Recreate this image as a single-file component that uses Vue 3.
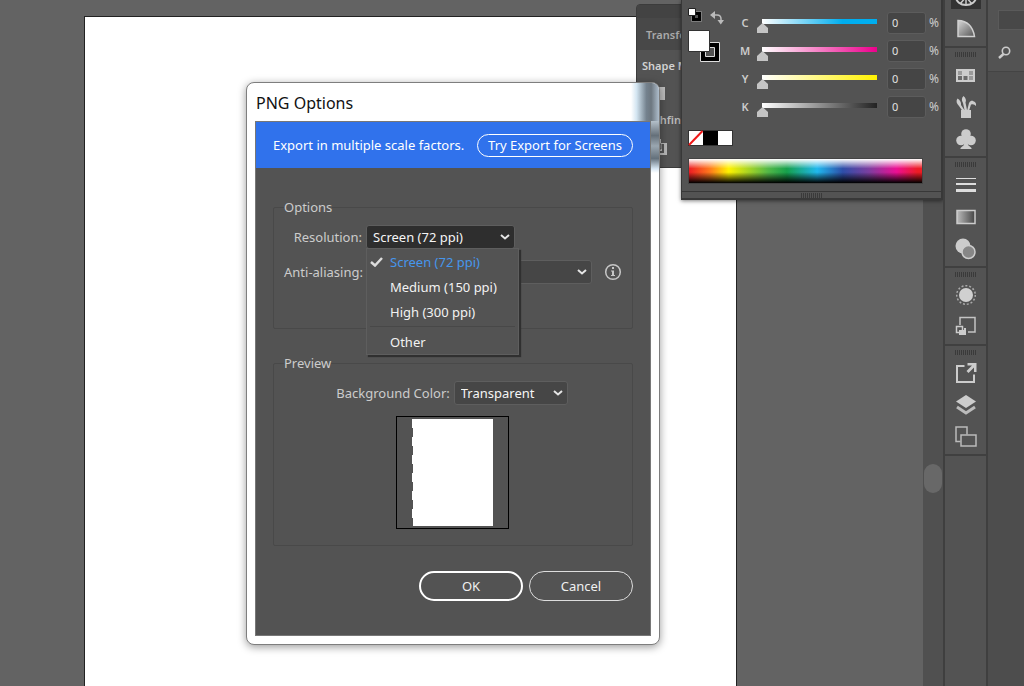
<script setup>
import { ref } from 'vue'

const channels = ref([
  { name: 'C', value: 0, tone: 'cyan' },
  { name: 'M', value: 0, tone: 'magenta' },
  { name: 'Y', value: 0, tone: 'yellow' },
  { name: 'K', value: 0, tone: 'black' },
])

const resolution = ref('Screen (72 ppi)')
const antialias = ref('Art Optimized')
const background = ref('Transparent')
const resolutions = ['Screen (72 ppi)', 'Medium (150 ppi)', 'High (300 ppi)']

const dock = [
  ['Color', 'Color Guide'],
  ['Swatches', 'Brushes', 'Symbols'],
  ['Stroke', 'Gradient', 'Transparency'],
  ['Appearance', 'Graphic Styles'],
  ['Asset Export', 'Layers', 'Artboards'],
]
</script>

<template>
  <div class="app">
    <main class="canvas">
      <div class="artboard"></div>
      <div class="scrollbar"><span class="scroll-thumb"></span></div>

      <section class="pathfinder" aria-label="Pathfinder">
        <div class="panel-bar"></div>
        <div class="panel-tab">Transform</div>
        <div class="panel-body">
          <div class="modes-label">Shape Modes:</div>
          <div class="mode-row">
            <svg width="16" height="16" viewBox="0 0 16 16"><path d="M2 2h13v13H6v-4H2z" fill="#bdbdbd" /></svg>
          </div>
          <div class="finders-label">Pathfinders:</div>
          <div class="mode-row">
            <svg width="18" height="18" viewBox="0 0 18 18"><path d="M1 1h10v4h6v12H6v-6H1z" fill="#b5b5b5" /><path d="M13 6v8H7" fill="none" stroke="#535353" stroke-width="2" /><path d="M6 6h5v5H6z" fill="#8c8c8c" stroke="#535353" /></svg>
          </div>
        </div>
      </section>

      <section class="color-panel" aria-label="Color">
        <div class="color-main">
          <div class="fill-column">
            <div class="fill-tools">
              <svg width="14" height="14" viewBox="0 0 14 14"><path d="M5.500 5.500h6v6h-6z" fill="#535353" stroke="#000" stroke-width="3" /><path d="M3.500 3.500h10v10h-10z" fill="none" stroke="#999" stroke-width=".6" /><path d="M.5.5h7v7h-7z" fill="#fff" stroke="#222" /></svg>
              <svg width="14" height="14" viewBox="0 0 14 14"><path d="M4 4h3q4 0 4 4v2" fill="none" stroke="#bbb" stroke-width="1.500" /><path d="M0 4l5-4v8zM7.500 9H14l-3.200 4.500z" fill="#bbb" /></svg>
            </div>
            <svg class="fill-stroke" width="34" height="34" viewBox="0 0 34 34"><path d="M12.500 12.500h19v19h-19z" fill="#000" stroke="#ddd" /><path d="M17.500 17.500h9v9h-9z" fill="#535353" stroke="#ddd" /><path d="M.5.5h21v21H.5z" fill="#fff" stroke="#333" /></svg>
          </div>
          <div class="channels">
            <div v-for="c in channels" :key="c.name" class="channel">
              <label :for="'range-' + c.name">{{ c.name }}</label>
              <input :id="'range-' + c.name" v-model.number="c.value" type="range" min="0" max="100" :class="['slider', c.tone]" />
              <input v-model.number="c.value" type="text" class="amount" :aria-label="c.name + ' percent'" />
              <span class="unit">%</span>
            </div>
          </div>
        </div>
        <svg class="quick" width="45" height="16" viewBox="0 0 45 16"><path d="M0 0h45v16H0z" fill="#333" /><path d="M1 1h14v14H1zM30 1h14v14H30z" fill="#fff" /><path d="M15 1h15v14H15z" fill="#000" /><path d="M1 15L14.500 1" stroke="#f01818" stroke-width="2" /></svg>
        <div class="spectrum"></div>
        <div class="panel-foot"><span class="grip"></span></div>
      </section>

      <section class="dialog" role="dialog" aria-label="PNG Options">
        <h1>PNG Options</h1>
        <div class="glass-top"></div>
        <div class="glass-side"></div>
        <div class="dialog-body">
          <div class="banner">
            <span>Export in multiple scale factors.</span>
            <button type="button">Try Export for Screens</button>
          </div>
          <form class="settings" @submit.prevent>
            <fieldset class="options">
              <legend>Options</legend>
              <div class="field">
                <label for="resolution">Resolution:</label>
                <div class="combo">
                  <select id="resolution" v-model="resolution" class="open">
                    <option v-for="r in resolutions" :key="r">{{ r }}</option>
                    <option>Other</option>
                  </select>
                  <svg class="chevron" width="10" height="6" viewBox="0 0 10 6"><path d="M1 1l4 3.500L9 1" /></svg>
                  <div class="menu">
                    <button v-for="r in resolutions" :key="r" type="button" :class="{ chosen: r === resolution }" @click="resolution = r">
                      <svg width="13" height="10" viewBox="0 0 13 10"><path v-if="r === resolution" d="M1 5l4 3.500L12 1" fill="none" stroke="#ddd" stroke-width="2.500" /></svg>
                      {{ r }}
                    </button>
                    <hr />
                    <button type="button" @click="resolution = 'Other'"><svg width="13" height="10"></svg>Other</button>
                  </div>
                </div>
              </div>
              <div class="field">
                <label for="antialias">Anti-aliasing:</label>
                <div class="combo wide">
                  <select id="antialias" v-model="antialias">
                    <option>Art Optimized</option>
                  </select>
                  <svg class="chevron" width="10" height="6" viewBox="0 0 10 6"><path d="M1 1l4 3.500L9 1" /></svg>
                </div>
                <svg class="info" width="18" height="18" viewBox="0 0 18 18"><circle cx="9" cy="9" r="7.300" fill="none" stroke="#c6c6c6" stroke-width="1.500" /><path d="M8 4h2v2H8zM7 7.500h3V12h1v1H7v-1h1V8.500H7z" fill="#c6c6c6" /></svg>
              </div>
            </fieldset>
            <fieldset class="preview">
              <legend>Preview</legend>
              <div class="field">
                <label for="background">Background Color:</label>
                <div class="combo small">
                  <select id="background" v-model="background">
                    <option>Transparent</option>
                    <option>White</option>
                    <option>Black</option>
                  </select>
                  <svg class="chevron" width="10" height="6" viewBox="0 0 10 6"><path d="M1 1l4 3.500L9 1" /></svg>
                </div>
              </div>
              <div class="thumb"><div class="page"></div></div>
            </fieldset>
            <div class="actions">
              <button type="submit" class="primary">OK</button>
              <button type="button">Cancel</button>
            </div>
          </form>
        </div>
      </section>
    </main>

    <nav class="dock" aria-label="Panels">
      <div v-for="(group, i) in dock" :key="i" class="dock-group">
        <span class="grip"></span>
        <button v-for="name in group" :key="name" type="button" :aria-label="name" :class="{ active: name === 'Color' }">
          <svg width="22" height="22" viewBox="0 0 22 22">
            <template v-if="name === 'Color'"><ellipse cx="11" cy="11" rx="10" ry="8" fill="none" stroke="#ccc" stroke-width="2" /><path d="M11 2v17M5 4l12 14M17 4L5 18" stroke="#ccc" stroke-width="1.500" /></template>
            <template v-else-if="name === 'Color Guide'">
              <defs><linearGradient id="guide" x1="0" y1="0" x2="1" y2="1"><stop offset=".15" stop-color="#c4c4c4" /><stop offset="1" stop-color="#555" /></linearGradient></defs>
              <path d="M3 2.500Q17 3 19.500 18.500H3z" fill="url(#guide)" stroke="#d0d0d0" stroke-width="1.500" />
            </template>
            <template v-else-if="name === 'Swatches'"><path d="M1 5h19v13H1z" fill="#ccc" /><path d="M3 7h4v4H3zM14 7h4v4h-4z" fill="#9a9a9a" /><path d="M3 12h4v4H3zM8.500 12h4v4h-4z" fill="#6a6a6a" /><path d="M14 12h4v4h-4z" fill="#999" /></template>
            <template v-else-if="name === 'Brushes'"><path d="M6 14h10v8H6zM9.500 14L8 7Q5.500 3 8.500 0q3.500 3 2 6.500l1.500 7.500zM7.500 15L4 10Q0 6 2.500 2.500 6.500 5 6 9l4 6zM12 15l2-8q.5-2 3-2.500l3 1.500q1.500 1.500 1 4-2-2.500-5-1.500l-2 6.500z" fill="#ccc" /></template>
            <template v-else-if="name === 'Symbols'"><circle cx="11" cy="6" r="4.800" fill="#ccc" /><circle cx="6" cy="12.500" r="4.800" fill="#ccc" /><circle cx="16" cy="12.500" r="4.800" fill="#ccc" /><path d="M9.500 8h3l.5 9 3.500 3v1h-11v-1L9 17z" fill="#ccc" /></template>
            <template v-else-if="name === 'Stroke'"><path d="M1 4h20v1H1zM1 9h20v2H1zM1 15h20v3H1z" fill="#ddd" /></template>
            <template v-else-if="name === 'Gradient'">
              <defs><linearGradient id="ramp"><stop offset="0" stop-color="#bbb" /><stop offset="1" stop-color="#444" /></linearGradient></defs>
              <path d="M2 4.500h18v13H2z" fill="url(#ramp)" stroke="#ccc" stroke-width="1.500" />
            </template>
            <template v-else-if="name === 'Transparency'"><circle cx="8" cy="8" r="7.500" fill="#ccc" /><circle cx="13.500" cy="14" r="6.500" fill="#878787" stroke="#ccc" stroke-width="1.500" /></template>
            <template v-else-if="name === 'Appearance'"><circle cx="11" cy="11" r="7" fill="#d0d0d0" /><circle cx="11" cy="11" r="9.300" fill="none" stroke="#aaa" stroke-width="1.500" stroke-dasharray="2 1.900" /></template>
            <template v-else-if="name === 'Graphic Styles'"><path d="M5 9V1.500h15V16h-7" fill="none" stroke="#c4c4c4" stroke-width="1.500" /><path d="M1.500 10.500h6v6h-6z" fill="none" stroke="#ccc" stroke-width="1.500" /><path d="M4 14h5v-2h2v7H4z" fill="#ccc" /></template>
            <template v-else-if="name === 'Asset Export'"><path d="M9.500 4H2v16h17v-7.500" fill="none" stroke="#ccc" stroke-width="2" /><path d="M12.500 1h9v9H19V5.500l-5.500 5.500-2-2L17 3.500h-4.500z" fill="#ccc" /></template>
            <template v-else-if="name === 'Layers'"><path d="M11 1l10 6.500L11 14 1 7.500z" fill="#ccc" /><path d="M2 13l9 6 9-6" fill="none" stroke="#bbb" stroke-width="3" /></template>
            <template v-else><path d="M5.500 15.500H1V1h11v7.500" fill="none" stroke="#bbb" stroke-width="1.500" /><path d="M6 9h15v11H6z" fill="none" stroke="#bbb" stroke-width="1.500" /></template>
          </svg>
        </button>
      </div>
    </nav>

    <aside class="side">
      <div class="side-top">
        <div class="side-field"></div>
        <svg width="14" height="14" viewBox="0 0 14 14"><circle cx="8" cy="5" r="3.700" fill="none" stroke="#ccc" stroke-width="1.600" /><path d="M5.500 8L1 12" stroke="#ccc" stroke-width="2.500" /></svg>
      </div>
    </aside>
  </div>
</template>

<style>
body { overflow: hidden; }
</style>

<style scoped>
* { box-sizing: border-box; }
.app {
  display: flex;
  height: 100vh;
  background: #535353;
  color: #ccc;
  font: 13px/18px "Noto Sans", "Open Sans", sans-serif;
}
button, input, select { font: inherit; color: inherit; margin: 0; }
button { padding: 0; border: 0; background: none; }

.canvas {
  position: relative;
  flex: 1;
  display: flex;
  justify-content: space-between;
  min-width: 0;
  overflow: hidden;
  background: #636363;
}
.artboard {
  flex: 1;
  margin: 16px 186px 0 84px;
  background: #fff;
  border: 1px solid #222;
  border-bottom: 0;
}
.scrollbar {
  display: flex;
  align-items: center;
  justify-content: center;
  width: 20px;
  padding-top: 270px;
  background: #505050;
}
.scroll-thumb { width: 18px; height: 29px; border-radius: 9px; background: #686868; }

.grip {
  display: block;
  width: 22px;
  height: 5px;
  background: repeating-linear-gradient(90deg, #3a3a3a 0 1px, #535353 1px 2px);
}

.pathfinder {
  position: absolute;
  left: 636px;
  top: 4px;
  width: 120px;
  overflow: hidden;
  border: 1px solid #3c3c3c;
  border-radius: 4px 4px 0 0;
  background: #535353;
  font-size: 11px;
  font-weight: 600;
  white-space: nowrap;
}
.panel-bar { height: 13px; background: #434343; }
.panel-tab { height: 32px; padding: 8px 9px; background: #484848; color: #aaa; }
.panel-body { padding: 7px 5px 2px; }
.modes-label { color: #d2d2d2; }
.mode-row { display: flex; height: 36px; align-items: center; padding-left: 8px; }
.finders-label { color: #bbb; }

.color-panel {
  position: absolute;
  left: 681px;
  top: 0;
  width: 262px;
  padding-top: 8px;
  border: solid #383838;
  border-width: 0 2px 2px 1px;
  background: #535353;
  box-shadow: 0 1px 4px rgba(0, 0, 0, 0.5);
}
.color-main { display: flex; padding: 0 0 0 6px; height: 122px; }
.fill-column { display: flex; flex-direction: column; gap: 5px; width: 48px; }
.fill-tools { display: flex; gap: 8px; }
.fill-tools svg + svg { margin-top: 3px; }
.channels { display: grid; flex: 1; gap: 6px; align-content: start; padding-top: 4px; }
.channel {
  display: grid;
  grid-template-columns: 18px 1fr 39px 12px;
  column-gap: 3px;
  height: 22px;
  align-items: center;
  font-size: 11px;
  font-weight: 600;
}
.channel label { text-align: center; }
.unit { font-size: 12px; font-weight: 400; }
.slider {
  appearance: none;
  width: 100%;
  height: 16px;
  background: linear-gradient(90deg, #fff, #000) 5px 4px / calc(100% - 12px) 5px no-repeat;
}
.slider.cyan { background-image: linear-gradient(90deg, #fff, #00aeef 70%); }
.slider.magenta { background-image: linear-gradient(90deg, #fff, #ec008c); }
.slider.yellow { background-image: linear-gradient(90deg, #fff, #fff200); }
.slider.black { background-image: linear-gradient(90deg, #fff, #222); }
.slider::-webkit-slider-thumb {
  appearance: none;
  width: 11px;
  height: 10px;
  margin-top: 10px;
  background: #c4c4c4;
  clip-path: polygon(50% 0, 100% 50%, 100% 100%, 0 100%, 0 50%);
}
.amount {
  width: 100%;
  height: 22px;
  padding: 0 4px 2px;
  border: 1px solid #5c5c5c;
  border-radius: 3px;
  background: #454545;
  color: #e2e2e2;
  font-weight: 400;
}
.quick { display: block; margin-left: 6px; }
.spectrum {
  height: 26px;
  margin: 12px 18px 7px 6px;
  border: 1px solid #444;
  background:
    linear-gradient(180deg, #fff, rgba(255, 255, 255, 0) 40%, rgba(0, 0, 0, 0) 55%, #000),
    linear-gradient(90deg, #ed1c24, #ff7a1c 9%, #fff200 17%, #52b848 34%, #16a04c 42%, #20b8ee 55%, #2e4ea8 66%, #7b3fa0 77%, #ec0f94 89%, #ed1c24 98%);
}
.panel-foot { display: flex; justify-content: center; padding: 1px 0 0; border-top: 1px solid #383838; }

.dialog {
  position: absolute;
  left: 246px;
  top: 82px;
  width: 414px;
  padding: 0 8px 8px;
  border: 1px solid #7e7e7e;
  border-radius: 8px;
  background: #fff;
  box-shadow: 0 2px 8px rgba(0, 0, 0, 0.4);
}
.dialog h1 {
  margin: 0;
  padding: 9px 1px 7px;
  color: #111;
  font-size: 16px;
  font-weight: 400;
  line-height: 22px;
}
.glass-top, .glass-side { position: absolute; right: 0; }
.glass-top {
  top: 0;
  width: 28px;
  height: 38px;
  border-radius: 0 7px 0 0;
  background: linear-gradient(90deg, #fff, #d3e5f1 20%, #74828e 55%, #6d7780 72%, #aebdcc);
}
.glass-side {
  top: 38px;
  width: 8px;
  height: 52px;
  background: linear-gradient(180deg, #b4c0ca, #65707a 28%, #9aa6b0 48%, #64717c 72%, #d9e8f5 92%, #fff);
}
.dialog-body { position: relative; border: 1px solid #777; background: #535353; }
.banner {
  display: flex;
  align-items: center;
  justify-content: space-between;
  height: 46px;
  padding: 0 17px;
  background: #3072ec;
  color: #fff;
}
.banner button { width: 156px; height: 23px; border: 1px solid #fff; border-radius: 12px; line-height: 18px; }
.settings { padding: 30px 17px 34px; }
fieldset {
  min-width: 0;
  margin: 0;
  padding: 0 10px;
  border: 1px solid #494949;
  border-radius: 2px;
}
legend { padding: 0; line-height: 18px; }
.options { height: 131px; padding-top: 8px; margin-bottom: 25px; }
.preview { height: 192px; padding: 9px 12px 0 10px; margin-bottom: 25px; }
.field { display: flex; align-items: center; gap: 4px; height: 24px; }
.options .field { margin: 1px 0 11px; }
.options .field label { width: 78px; text-align: right; white-space: nowrap; }
.combo { position: relative; width: 149px; }
.combo.wide { width: 226px; }
.combo.small { width: 114px; }
.combo select {
  display: block;
  appearance: none;
  width: 100%;
  height: 24px;
  padding: 0 24px 0 6px;
  border: 1px solid #5e5e5e;
  border-radius: 3px;
  background: #464646;
  color: #f5f5f5;
  line-height: 20px;
}
.combo select.open { background: #2e2e2e; }
.chevron { position: absolute; right: 5px; top: 9px; fill: none; stroke: #e6e6e6; stroke-width: 2; pointer-events: none; }
.info { margin-left: 8px; }
.menu {
  position: absolute;
  z-index: 2;
  top: 23px;
  left: 0;
  width: 153px;
  border: 1px solid #5e5e5e;
  background: #535353;
  box-shadow: 2px 2px 1px #303030;
}
.menu button { display: flex; align-items: center; gap: 7px; width: 100%; height: 25px; padding-left: 3px; color: #f2f2f2; white-space: nowrap; }
.menu .chosen { color: #4696ec; }
.menu hr { height: 1px; margin: 2px 3px; border: 0; background: #484848; }
.preview .field { justify-content: center; }
.thumb { display: flex; width: 113px; height: 113px; margin: 11px auto 0; padding: 2px 15px; border: 1px solid #000; }
.page {
  flex: 1;
  background: repeating-linear-gradient(180deg, #fff 0 9px, #535353 9px 18px) 0 0 / 1px 100% no-repeat, linear-gradient(#fff, #fff) 1px 0 no-repeat;
}
.actions { display: flex; justify-content: flex-end; gap: 6px; }
.actions button { width: 104px; height: 30px; border: 1px solid #ddd; border-radius: 15px; color: #f0f0f0; }
.actions .primary { border: 2px solid #fff; }

.dock { width: 45px; overflow: hidden; border: solid #3f3f3f; border-width: 0 2px; background: #535353; }
.dock-group { display: flex; flex-direction: column; align-items: center; padding: 4px 0 1px; border-bottom: 2px solid #404040; }
.dock-group:first-child { margin-top: -30px; }
.dock-group .grip { margin-bottom: 2px; }
.dock-group button { display: flex; align-items: center; justify-content: center; width: 30px; height: 32px; }
.dock-group .active svg { box-sizing: content-box; padding: 1px 4px; background: #333; }

.side { width: 36px; overflow: hidden; background: #4d4d4d; }
.side-top { height: 72px; padding: 10px 0 0 10px; border-bottom: 1px solid #444; background: #535353; }
.side-field { height: 20px; margin-bottom: 16px; border: 1px solid #5a5a5a; border-right: 0; background: #484848; }
</style>
